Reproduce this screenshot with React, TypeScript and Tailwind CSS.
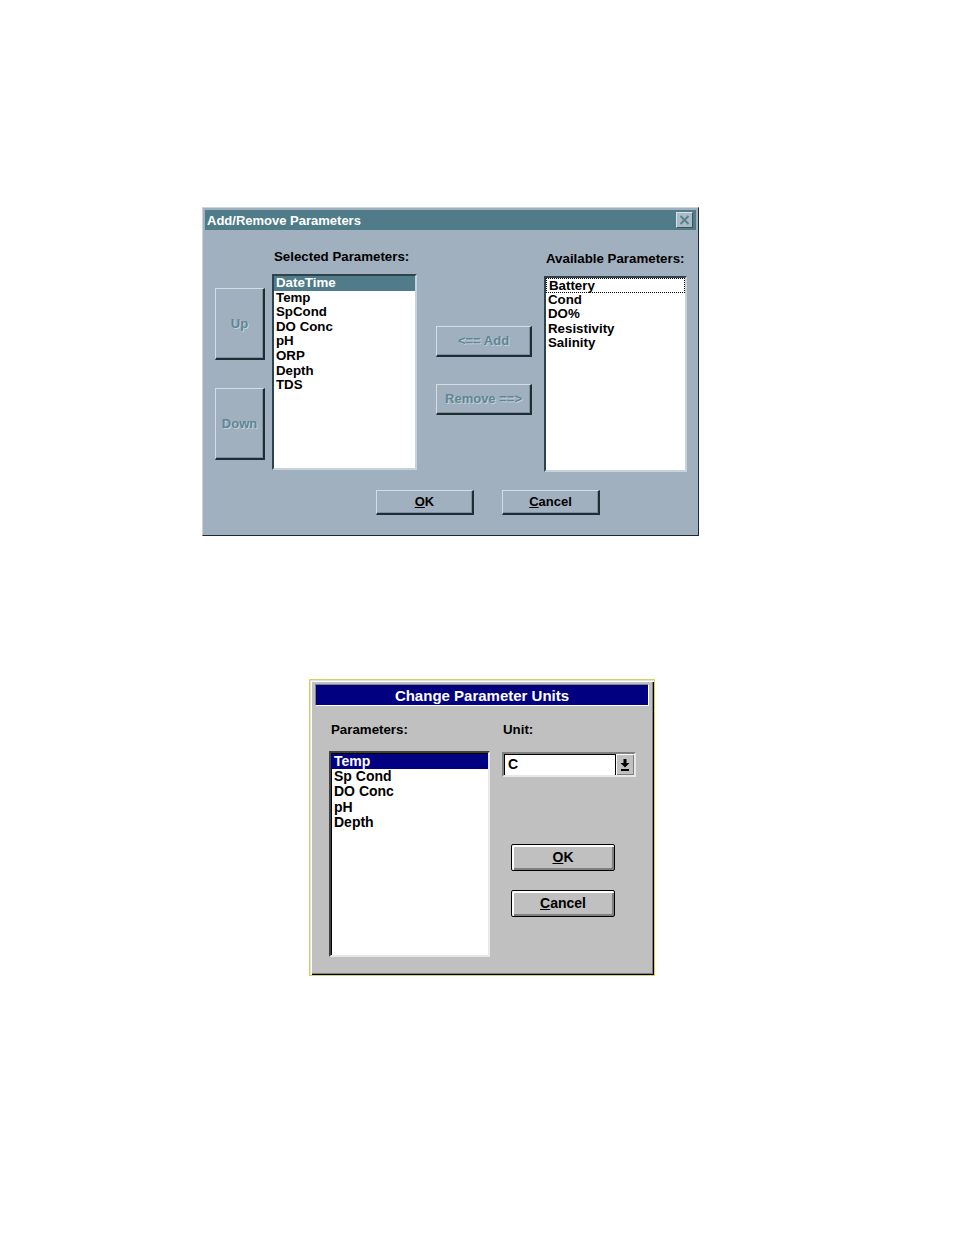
import React from "react";

const F = { fontFamily: '"Liberation Sans", Arial, sans-serif' };

function TealBtn({ label, w, h, disabled, children }: { label?: string; w: string; h: string; disabled?: boolean; children?: React.ReactNode }) {
  return (
    <div
      className={`${w} ${h} flex items-center justify-center border-t border-l border-t-[#d3dde4] border-l-[#d3dde4] border-r-2 border-b-2 border-r-[#1f2d34] border-b-[#1f2d34] bg-[#a1b0bf] shadow-[inset_-1px_-1px_0_#7d909c] text-[13px] font-bold ${disabled ? "text-[#5d8795] [text-shadow:1px_1px_0_#c5d2da]" : "text-black"}`}
    >
      {children ?? label}
    </div>
  );
}

function GrayBtn({ children }: { children: React.ReactNode }) {
  return (
    <div className="w-[104px] h-[27px] flex items-center justify-center border border-black rounded-[2px] bg-[#c0c0c0] shadow-[inset_1px_1px_0_#fff,inset_2px_2px_0_#fff,inset_-1px_-1px_0_#808080,inset_-2px_-2px_0_#808080] text-[14px] font-bold text-black">
      {children}
    </div>
  );
}

export default function App() {
  const selected = ["DateTime", "Temp", "SpCond", "DO Conc", "pH", "ORP", "Depth", "TDS"];
  const available = ["Battery", "Cond", "DO%", "Resistivity", "Salinity"];
  const params2 = ["Temp", "Sp Cond", "DO Conc", "pH", "Depth"];

  return (
    <div className="w-[954px] h-[1235px] bg-white pt-[207px]" style={F}>
      {/* Dialog 1 */}
      <div className="ml-[202px] w-[497px] h-[329px] border border-t-[#c9d4dc] border-l-[#c9d4dc] border-r-[#1d2a30] border-b-[#1d2a30] bg-[#a1b0bf] p-[2px] flex flex-col">
        <div className="h-[20px] bg-[#4f7c88] flex items-center justify-between pl-[2px] pr-[3px]">
          <span className="text-white text-[13px] font-bold leading-none">Add/Remove Parameters</span>
          <div className="w-[17px] h-[16px] bg-[#a9bcc6] border-t border-l border-[#d8e2e8] border-r border-b border-r-[#3a5560] border-b-[#3a5560] flex items-center justify-center">
            <svg width="11" height="10" viewBox="0 0 11 10">
              <path d="M1.5 1 L9.5 9 M9.5 1 L1.5 9" stroke="#5a7e8a" strokeWidth="1.8" />
            </svg>
          </div>
        </div>
        <div className="flex flex-row items-start">
          <div className="ml-[10px] pt-[58px] flex flex-col">
            <TealBtn label="Up" w="w-[50px]" h="h-[72px]" disabled />
            <div className="mt-[28px]">
              <TealBtn label="Down" w="w-[50px]" h="h-[72px]" disabled />
            </div>
          </div>
          <div className="ml-[7px] pt-[19px] flex flex-col">
            <div className="ml-[2px] h-[16px] leading-[16px] text-[13.3px] font-bold text-black">Selected Parameters:</div>
            <div className="mt-[9px] w-[145px] h-[196px] bg-white border-2 border-t-[#2e434c] border-l-[#2e434c] border-r-[#c7d3db] border-b-[#c7d3db]">
              {selected.map((s, i) => (
                <div
                  key={s}
                  className={`h-[14.6px] leading-[14.6px] pl-[2px] text-[13.3px] font-bold ${i === 0 ? "bg-[#4f7c88] text-white" : "text-black"}`}
                >
                  {s}
                </div>
              ))}
            </div>
          </div>
          <div className="ml-[19px] pt-[96px] flex flex-col">
            <TealBtn label="<== Add" w="w-[96px]" h="h-[31px]" disabled />
            <div className="mt-[27px]">
              <TealBtn label="Remove ==>" w="w-[96px]" h="h-[31px]" disabled />
            </div>
          </div>
          <div className="ml-[12px] pt-[21px] flex flex-col">
            <div className="ml-[2px] h-[16px] leading-[16px] text-[13.3px] font-bold text-black">Available Parameters:</div>
            <div className="mt-[9px] w-[143px] h-[196px] bg-white border-2 border-t-[#2e434c] border-l-[#2e434c] border-r-[#c7d3db] border-b-[#c7d3db]">
              {available.map((s, i) => (
                <div
                  key={s}
                  className={`h-[14.6px] leading-[13px] pl-[2px] text-[13.3px] font-bold text-black ${i === 0 ? "border border-dotted border-black pl-[1px]" : ""}`}
                >
                  {s}
                </div>
              ))}
            </div>
          </div>
        </div>
        <div className="mt-[18px] ml-[171px] flex flex-row">
          <TealBtn w="w-[98px]" h="h-[25px]">
            <span><span className="underline">O</span>K</span>
          </TealBtn>
          <div className="ml-[28px]">
            <TealBtn w="w-[98px]" h="h-[25px]">
              <span><span className="underline">C</span>ancel</span>
            </TealBtn>
          </div>
        </div>
      </div>

      {/* Dialog 2 */}
      <div className="mt-[143px] ml-[309px] w-[346px] h-[297px] border border-dotted border-[#e6e600] bg-[#c0c0c0]">
        <div className="w-full h-full shadow-[inset_1px_1px_0_#dfdfdf,inset_2px_2px_0_#ffffff,inset_-1px_-1px_0_#000000,inset_-2px_-2px_0_#808080] flex flex-col">
          <div className="ml-[5px] mt-[4px] w-[334px] h-[22px] bg-[#000080] border border-t-[#808080] border-l-[#808080] border-r-[#ffffff] border-b-[#ffffff] flex items-center justify-center">
            <span className="text-white text-[15px] font-bold leading-none">Change Parameter Units</span>
          </div>
          <div className="flex flex-row items-start">
            <div className="ml-[19px] pt-[16px] flex flex-col">
              <div className="ml-[2px] h-[16px] leading-[16px] text-[13.3px] font-bold text-black">Parameters:</div>
              <div className="mt-[13px] w-[161px] h-[206px] bg-white border-2 border-t-[#404040] border-l-[#404040] border-r-[#e8e8e8] border-b-[#e8e8e8] shadow-[inset_1px_1px_0_#000]">
                <div className="pt-[1px]">
                  {params2.map((s, i) => (
                    <div
                      key={s}
                      className={`h-[15.2px] leading-[15.2px] pl-[3px] text-[14px] font-bold ${i === 0 ? "bg-[#000080] text-white" : "text-black"}`}
                    >
                      {s}
                    </div>
                  ))}
                </div>
              </div>
            </div>
            <div className="ml-[12px] pt-[16px] flex flex-col">
              <div className="ml-[1px] h-[16px] leading-[16px] text-[13.3px] font-bold text-black">Unit:</div>
              <div className="mt-[14px] w-[134px] h-[25px] bg-white border-2 border-t-[#808080] border-l-[#808080] border-r-[#e8e8e8] border-b-[#e8e8e8] shadow-[inset_1px_1px_0_#000] flex flex-row">
                <div className="flex-1 pl-[4px] text-[14px] font-bold text-black leading-[21px]">C</div>
                <div className="w-[19px] h-full bg-[#c0c0c0] border-l border-black shadow-[inset_1px_1px_0_#fff,inset_-1px_-1px_0_#808080] flex items-center justify-center">
                  <svg width="10" height="14" viewBox="0 0 10 14">
                    <rect x="3.5" y="1" width="3" height="4" fill="#000" />
                    <path d="M0.5 5 L9.5 5 L5 9.5 Z" fill="#000" />
                    <rect x="1" y="11" width="8" height="2" fill="#000" />
                  </svg>
                </div>
              </div>
              <div className="ml-[9px] mt-[67px]">
                <GrayBtn>
                  <span><span className="underline">O</span>K</span>
                </GrayBtn>
              </div>
              <div className="ml-[9px] mt-[19px]">
                <GrayBtn>
                  <span><span className="underline">C</span>ancel</span>
                </GrayBtn>
              </div>
            </div>
          </div>
        </div>
      </div>
    </div>
  );
}
